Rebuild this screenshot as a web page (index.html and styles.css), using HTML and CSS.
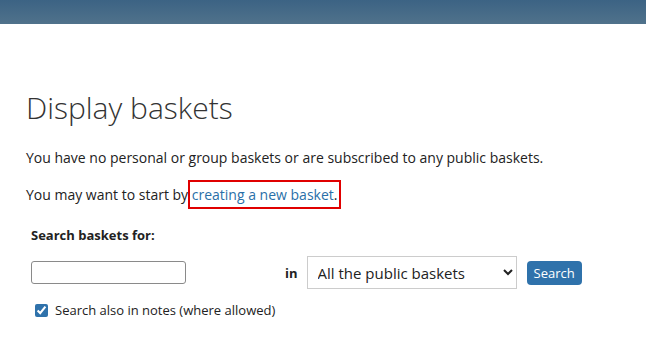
FILE: index.html
```html
<!DOCTYPE html>
<html lang="en">
<head>
    <meta charset="UTF-8">
    <title>Display baskets</title>
    <link rel="stylesheet" href="styles.css">
</head>
<body>
    <header class="top-bar"></header>

    <main class="content">
        <h1>Display baskets</h1>
        <p class="note">You have no personal or group baskets or are subscribed to any public baskets.</p>
        <p class="note">You may want to start by <span class="highlight"><a href="#" class="new-basket">creating a new basket</a>.</span></p>

        <form class="search-form">
            <div class="search-label">Search baskets for:</div>
            <div class="search-row">
                <input type="text" class="search-input">
                <span class="in-label">in</span>
                <select class="scope-select">
                    <option>All the public baskets</option>
                </select>
                <button type="button" class="search-button">Search</button>
            </div>
            <label class="notes-option">
                <input type="checkbox" checked>
                Search also in notes (where allowed)
            </label>
        </form>
    </main>
</body>
</html>
```

FILE: styles.css
```css
* {
    margin: 0;
    padding: 0;
    box-sizing: border-box;
}

body {
    font-family: "Open Sans", Arial, sans-serif;
    color: #222;
    background-color: white;
}

.top-bar {
    height: 24px;
    background: linear-gradient(to bottom, #3c6384, #50728b);
}

.content {
    padding: 64px 26px 0;
}

h1 {
    font-size: 30px;
    font-weight: 300;
    line-height: 40px;
    color: #333;
    margin-bottom: 20px;
}

.note {
    font-size: 14px;
    line-height: 20px;
    margin-bottom: 17px;
}

.highlight {
    outline: 2px solid #e00000;
    outline-offset: 2px;
    padding: 1px 0;
}

.new-basket {
    color: #2a6fa8;
    text-decoration: none;
}

.search-form {
    padding: 4px 5px 0;
}

.search-label {
    font-size: 13px;
    font-weight: bold;
    line-height: 18px;
    margin-bottom: 12px;
}

.search-row {
    display: flex;
    align-items: center;
}

.search-input {
    width: 155px;
    height: 23px;
    border: 1px solid #8a8a8a;
    border-radius: 3px;
}

.in-label {
    font-size: 13px;
    font-weight: bold;
    margin-left: 99px;
    margin-right: 9px;
}

.scope-select {
    width: 210px;
    height: 33px;
    padding: 0 6px;
    font-family: "Open Sans", Arial, sans-serif;
    font-size: 15px;
    color: #222;
    border: 1px solid #ccc;
    background-color: white;
}

.search-button {
    margin-left: 10px;
    height: 24px;
    padding: 0 7px;
    font-family: "Open Sans", Arial, sans-serif;
    font-size: 13px;
    color: white;
    background-color: #2f72ab;
    border: none;
    border-radius: 4px;
}

.notes-option {
    display: flex;
    align-items: center;
    gap: 7px;
    margin-top: 12px;
    padding-left: 4px;
    font-size: 13px;
}

.notes-option input {
    width: 13px;
    height: 13px;
    accent-color: #2f72ab;
}
```
